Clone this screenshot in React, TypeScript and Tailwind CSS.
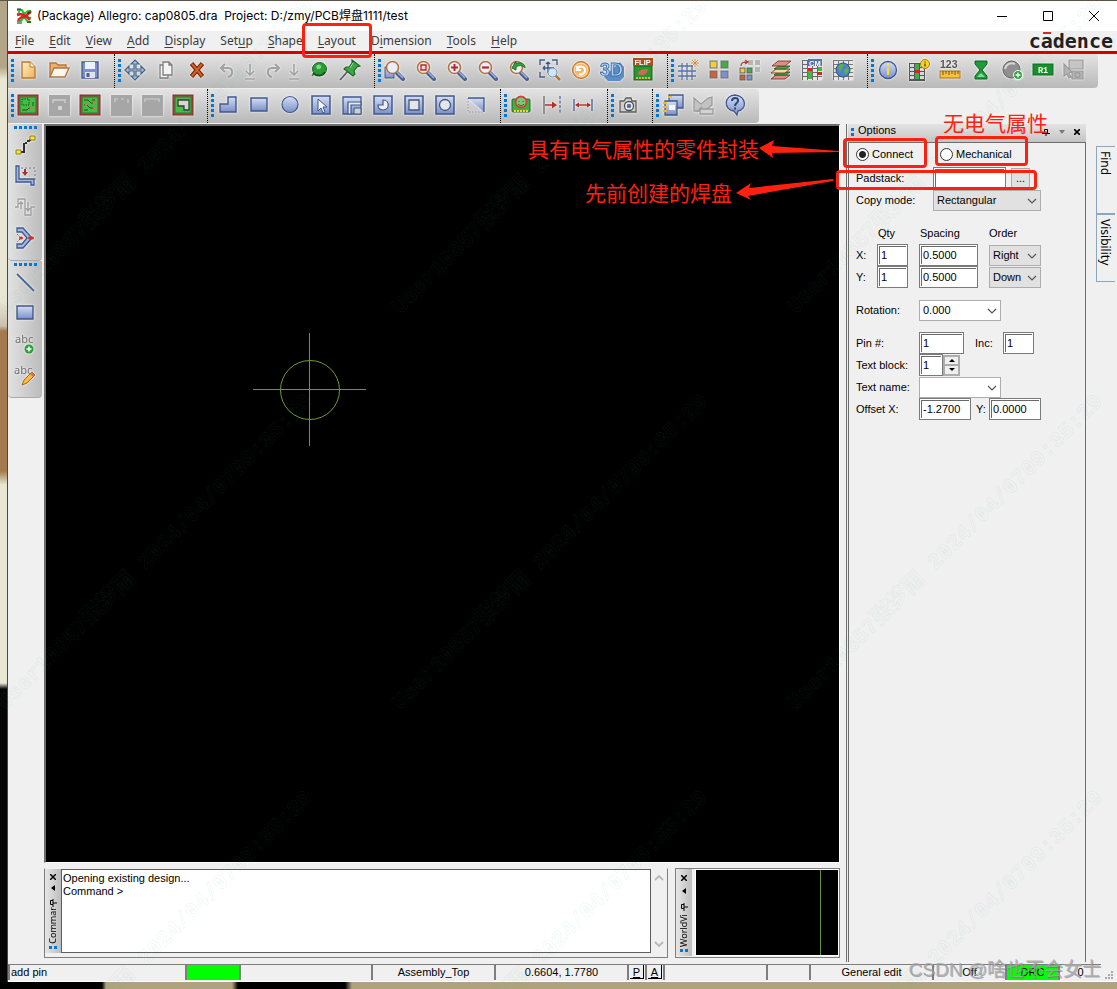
import React from "react";

type Kids = { children?: React.ReactNode };

const ink = "#3f5788";

/* ---------- icon drawings, 24 x 24 ---------- */

const Lens = ({ children }: Kids) => (
  <>
    <path d="M14 15l6 6" stroke="#4a5f94" strokeWidth="4" strokeLinecap="round" />
    <path d="M14 14l6 6" stroke="#9fb0dc" strokeWidth="1.5" />
    <circle cx="9.500" cy="9.500" r="6" fill="#e9eefb" stroke="#b07440" strokeWidth="1.600" />
    {children}
  </>
);

const Pcb = ({ children }: Kids) => (
  <>
    <rect x="2" y="2" width="20" height="20" fill="#b04a4a" stroke="#7d2525" />
    <rect x="4" y="4" width="16" height="16" fill="#43bd43" stroke="#2a7a2a" />
    {children}
  </>
);

const Dim = ({ children }: Kids) => (
  <>
    <rect x="2" y="2" width="21" height="21" fill="#a6a6a6" />
    {children}
  </>
);

const Tile = ({ children }: Kids) => (
  <>
    <rect x="3" y="3" width="18" height="18" fill="url(#blue)" stroke={ink} strokeWidth="1.500" />
    {children}
  </>
);

const Cells = ({ x, y, cols, rows, fill = "#b9bdc6" }: { x: number; y: number; cols: number; rows: number; fill?: string }) => (
  <>
    {Array.from({ length: cols * rows }, (_, i) => (
      <rect key={i} x={x + (i % cols) * 5} y={y + Math.floor(i / cols) * 4} width="4" height="3" fill={fill} />
    ))}
  </>
);

const art: Record<string, React.ReactNode> = {
  new: (
    <>
      <path d="M6 4h8l5 5v11H6z" fill="url(#sand)" stroke="#b87a35" strokeWidth="1.400" />
      <path d="M14 4v5h5" fill="#fff3d6" stroke="#b87a35" />
    </>
  ),
  open: (
    <>
      <path d="M3 19V5h6l2 2h8v3" fill="#e9b271" stroke="#b5743a" strokeWidth="1.400" />
      <path d="M3 19l4-9h15l-4 9z" fill="#fbf8f3" stroke="#b5743a" strokeWidth="1.400" />
    </>
  ),
  save: (
    <>
      <path d="M4 4h16v16H4z" fill="#7d92cb" stroke="#4b5d93" strokeWidth="1.400" />
      <path d="M7 4h10v7H7z" fill="#eef1fb" />
      <path d="M7 14h10v6H7z" fill="#dfe3ef" />
      <path d="M8.500 15h3v4h-3z" fill="#4b5d93" />
    </>
  ),
  move: (
    <path
      d="M12 2l4 4h-3v5h5V8l4 4-4 4v-3h-5v5h3l-4 4-4-4h3v-5H6v3l-4-4 4-4v3h5V6H8z"
      fill="#a9bfe0"
      stroke="#466587"
      strokeWidth="1.200"
    />
  ),
  copy: (
    <g fill="#f4f4f4" stroke="#7c7c7c" strokeWidth="1.300">
      <path d="M6 7h8v13H6z" />
      <path d="M9 4h6l3 3v10H9z" />
      <path d="M15 4v3h3" fill="none" />
    </g>
  ),
  remove: (
    <>
      <path d="M6.500 5.500l11 13M17.500 5.500l-11 13" stroke="#7a2808" strokeWidth="4.500" />
      <path d="M7 6l10 12M17 6L7 18" stroke="#d2602a" strokeWidth="2" />
    </>
  ),
  undo: <path d="M9 6l-4 4 4 4M6 10h6c6 0 5 8 0 9" fill="none" stroke="#a2a2a2" strokeWidth="2.200" />,
  redo: <path d="M15 6l4 4-4 4M18 10h-6c-6 0-5 8 0 9" fill="none" stroke="#a2a2a2" strokeWidth="2.200" />,
  down: <path d="M12 6v10M8 13l4 4 4-4M7 21h10" fill="none" stroke="#a2a2a2" strokeWidth="1.600" />,
  ball: (
    <>
      <path d="M5 18l3-4" stroke="#666" strokeWidth="1.500" />
      <ellipse cx="12.500" cy="11" rx="7" ry="6.500" fill="#2c9a35" stroke="#196322" />
      <path d="M6 15c4 4 10 3 12-1" fill="none" stroke="#155a1d" strokeWidth="2" />
      <path d="M9 8c2-2 4-2 5 0s-2 4-4 3" fill="#7fd886" />
    </>
  ),
  pin: (
    <>
      <path d="M2 22l8-9" stroke="#5c5c5c" strokeWidth="1.800" />
      <path d="M14 2l8 6-3 1-3 4 1 3-2 2-9-7 2-2h3l3-4z" fill="#3fa648" stroke="#1b6626" strokeWidth="1.200" />
      <path d="M15 5l-3 5" stroke="#98e09d" />
    </>
  ),
  zoomFit: (
    <>
      <path d="M2 9h9v11H2z" fill="url(#blue)" stroke={ink} />
      <Lens />
    </>
  ),
  zoomBox: (
    <Lens>
      <path d="M7 7h5v5H7z" fill="#f6d8d8" stroke="#b42b2b" strokeWidth="1.400" />
    </Lens>
  ),
  zoomIn: (
    <Lens>
      <path d="M9.500 6v7M6 9.500h7" stroke="#b42b2b" strokeWidth="2" />
    </Lens>
  ),
  zoomOut: (
    <Lens>
      <path d="M6 9.500h7" stroke="#b42b2b" strokeWidth="2.200" />
    </Lens>
  ),
  zoomPrev: (
    <Lens>
      <path d="M5 10l4-7v3c5-3 9 0 9 4-3-3-6-3-9-1v3z" fill="#35a33c" stroke="#1d6c25" />
    </Lens>
  ),
  zoomWorld: (
    <>
      <path d="M2 7V2h5M14 2h5v5M2 14v5h5M10 5v10M5 10h11M10 4l-2 2M10 4l2 2M5 10l2-2M5 10l2 2" fill="none" stroke={ink} strokeWidth="1.400" />
      <path d="M17 17l5 5" stroke="#b07440" strokeWidth="2.500" />
      <circle cx="14.500" cy="14.500" r="4.500" fill="#cfe7fb" stroke="#6c8fc0" />
    </>
  ),
  refresh: (
    <>
      <circle cx="12" cy="12" r="8.500" fill="#f2a04a" stroke="#b8702a" />
      <circle cx="12" cy="12" r="6.800" fill="#f6b768" stroke="#fbe3c0" />
      <path d="M8 8v4h4M8 12c1-5 8-4 8 0s-4 5-6 4" fill="none" stroke="#fff" strokeWidth="2" />
    </>
  ),
  three: (
    <>
      <path d="M4 19l4 4h12l4-4V9l-4-5z" fill="#5d8dc4" />
      <text x="0" y="18" fontFamily="Liberation Sans" fontSize="18" fontWeight="bold" fill="#b5d4f2" stroke="#376aa5" strokeWidth=".9">
        3D
      </text>
    </>
  ),
  flip: (
    <>
      <rect x="3" y="8" width="18" height="14" fill="#2d9434" stroke="#125f1a" />
      <path d="M5 20h14" stroke="#f0d23c" strokeWidth="1.500" strokeDasharray="2 1" />
      <path d="M7 16c1-5 5-5 10-5-1 5-4 7-8 6z" fill="#cc6c53" />
      <rect x="2" y="0" width="20" height="8" fill="#a8501c" />
      <text x="3.500" y="7" fontFamily="Liberation Sans" fontSize="7.500" fontWeight="bold" fill="#fff">
        FLIP
      </text>
    </>
  ),
  grid: (
    <>
      <path d="M6 5v17M11 5v17M16 7v15M2 8h15M2 13h18M2 18h18" stroke="#5872a6" strokeWidth="1.300" />
      <path d="M19 1v8M15 5h8M16 2l6 6M22 2l-6 6" stroke="#d98425" strokeWidth=".8" />
    </>
  ),
  place: (
    <g stroke="#6e6e6e">
      <rect x="3" y="3" width="7" height="7" fill="#f1cf3c" />
      <rect x="14" y="3" width="7" height="7" fill="#3fae43" />
      <rect x="3" y="13" width="7" height="7" fill="#c9623d" />
      <rect x="14" y="13" width="7" height="7" fill="#7d92cb" />
    </g>
  ),
  unplace: (
    <>
      <path d="M10 2h5v5h-5zM17 2h5v5h-5zM17 9h5v5h-5z" fill="#b5b5b5" />
      <g stroke="#5e5e5e">
        <rect x="2" y="10" width="5" height="5" fill="#f1cf3c" />
        <rect x="9" y="10" width="5" height="5" fill="#3fae43" />
        <rect x="2" y="17" width="5" height="5" fill="#c9623d" />
        <rect x="9" y="17" width="5" height="5" fill="#7d92cb" />
      </g>
      <path d="M3 8c0-4 3-4 6-4M7 2l3 2-3 2" fill="none" stroke="#b43a2e" strokeWidth="1.300" />
    </>
  ),
  layers: (
    <g strokeWidth=".9">
      <path d="M7 17h14l-5 4H2z" fill="#dd8f80" stroke="#7c2f2a" />
      <path d="M9 14h12l-4 3H5z" fill="#48a548" stroke="#1d5f22" />
      <path d="M7 11h14l-5 4H2z" fill="#f2dc9a" stroke="#7c2f2a" />
      <path d="M9 8h12l-4 3H5z" fill="#48a548" stroke="#1d5f22" />
      <path d="M9 3h13l-6 5H3z" fill="#dd8f80" stroke="#7c2f2a" />
    </g>
  ),
  cm: (
    <>
      <rect x="2" y="2" width="20" height="20" fill="#6b6b6b" />
      <Cells x={3} y={3} cols={4} rows={5} fill="#e6e6e6" />
      <path d="M8 13h4v8H8zM18 9h4v4h-4z" fill="#3fb83f" />
      <path d="M8 10h4v3H8zM17 14h5v3h-5z" fill="#dc2323" />
      <rect x="8" y="1" width="14" height="7" fill="#5473ab" />
      <text x="9" y="7.500" fontFamily="Liberation Sans" fontSize="7.500" fontWeight="bold" fill="#fff">
        CM
      </text>
    </>
  ),
  globe: (
    <>
      <rect x="2" y="2" width="20" height="20" fill="#777" />
      <Cells x={3} y={3} cols={4} rows={5} fill="#e6e6e6" />
      <circle cx="12" cy="12" r="7" fill="#4d83c4" stroke="#2c4f86" />
      <path d="M7 9c2-4 5-3 6-2l-2 3-2 4zM13 12l4-3 1 4-4 4z" fill="#58b04e" />
    </>
  ),
  info: (
    <>
      <circle cx="12" cy="12" r="8.500" fill="url(#blue)" stroke={ink} strokeWidth="1.300" />
      <path d="M11 10h2v7h-2zM11 6h2v2.500h-2z" fill="#f4e12e" />
    </>
  ),
  gridInfo: (
    <>
      <rect x="2" y="5" width="16" height="18" fill="#555" />
      <Cells x={3} y={6} cols={3} rows={4} fill="#dadada" />
      <path d="M8 6h4v15H8z" fill="#3fae43" />
      <path d="M8 12h4v3H8z" fill="#dc2323" />
      <circle cx="18" cy="6" r="4.500" fill="#fbd326" stroke="#a87d0c" />
      <path d="M18 3.500v1M18 5.500v3" stroke="#513c00" strokeWidth="1.300" />
    </>
  ),
  ruler: (
    <>
      <text x="2" y="10" fontFamily="Liberation Sans" fontSize="10.500" fontWeight="bold" fill="#555">
        123
      </text>
      <rect x="2" y="13" width="20" height="7" fill="#f5c242" stroke="#a8701b" />
      <path d="M5 13v4M8 13v3M11 13v4M14 13v3M17 13v4M20 13v3" stroke="#7d4d0c" />
    </>
  ),
  glass: (
    <>
      <path d="M6 3h12v3l-5 6 5 6v3H6v-3l5-6-5-6z" fill="#1f9a3c" stroke="#0c5f20" />
      <path d="M8 19l4-4 4 4z" fill="#7fe093" />
    </>
  ),
  disc: (
    <>
      <circle cx="11.500" cy="11.500" r="8.500" fill="#8f8f8f" stroke="#5e5e5e" />
      <path d="M5 11c1-5 6-7 10-5" fill="none" stroke="#d8d8d8" strokeWidth="2" />
      <circle cx="18" cy="17" r="4.500" fill="#2ba03a" stroke="#fff" />
      <path d="M18 14.500v5M15.500 17h5" stroke="#fff" strokeWidth="1.400" />
    </>
  ),
  r1: (
    <>
      <rect x="2" y="6" width="20" height="11" fill="#188f2c" stroke="#0f6a1e" />
      <text x="7" y="14.500" fontFamily="Liberation Mono" fontSize="8.500" fontWeight="bold" fill="#e8ffe8">
        R1
      </text>
    </>
  ),
  machine: (
    <g fill="#b4b4b4" stroke="#999" strokeWidth="1.200">
      <path d="M7 2h14v9H7z" fill="#c5c5c5" />
      <path d="M10 13h11v8H10zM2 6l8 8-3 1 2 4-2 1-2-4-3 2z" />
      <circle cx="15.500" cy="17" r="2.500" />
    </g>
  ),
  pcbA: (
    <Pcb>
      <path d="M6 6h7v6H6z" fill="none" stroke="#17551a" strokeDasharray="1.500 1" />
      <path d="M6 17h5l2-2h3M17 9v4" fill="none" stroke="#17551a" />
      <circle cx="15" cy="15" r="1.500" fill="#e06a5b" />
    </Pcb>
  ),
  dimA: (
    <Dim>
      <path d="M6 10V7h12v3" fill="none" stroke="#d0d0d0" strokeWidth="1.300" />
      <path d="M11 13h4v4h-4z" fill="#d4d4d4" />
    </Dim>
  ),
  pcbB: (
    <Pcb>
      <path d="M6 7h4l3 3h3M6 12h3l3 3h4M6 17h4M14 7h3" fill="none" stroke="#17551a" />
      <circle cx="8" cy="12" r="1.300" fill="#e06a5b" />
      <circle cx="16" cy="15" r="1.300" fill="#e06a5b" />
      <circle cx="16" cy="10" r="1.300" fill="#e06a5b" />
    </Pcb>
  ),
  dimB: (
    <Dim>
      <path d="M6 9V6h3M12 6h3M19 6v4" fill="none" stroke="#cfcfcf" strokeWidth="1.200" />
    </Dim>
  ),
  dimC: (
    <Dim>
      <path d="M5 9V6h14v3" fill="none" stroke="#cfcfcf" strokeWidth="1.200" />
    </Dim>
  ),
  pcbC: (
    <Pcb>
      <path d="M7 7h11v10h-5v-4H7z" fill="#d6d6d6" stroke="#3b3b3b" strokeWidth="1.300" />
    </Pcb>
  ),
  shape: <path d="M12 4h8v15H4v-8h8z" fill="url(#blue)" stroke={ink} strokeWidth="1.400" />,
  rect: <path d="M4 5h16v13H4z" fill="url(#blue)" stroke={ink} strokeWidth="1.400" />,
  circle: <circle cx="12" cy="11.500" r="8" fill="url(#blue)" stroke={ink} strokeWidth="1.200" />,
  pick: (
    <Tile>
      <path d="M9 6v12l3-3 2 5 2-1-2-5h4z" fill="#f5f7fc" stroke={ink} />
    </Tile>
  ),
  corner: (
    <>
      <path d="M3 4h18v17H3z" fill="url(#blue)" stroke={ink} strokeWidth="1.300" />
      <path d="M8 21V9h13v3H11v9z" fill="#e7ebf6" stroke={ink} strokeWidth="1.200" />
      <path d="M14 21v-6h7v6z" fill="#cfcfcf" stroke={ink} />
    </>
  ),
  arc: (
    <Tile>
      <path d="M7 12h5V7c7 0 7 10 0 10-3 0-5-2-5-5z" fill="#edf0f9" stroke={ink} strokeWidth="1.200" />
    </Tile>
  ),
  hole: (
    <Tile>
      <path d="M7 7h10v10H7z" fill="#e6e6e6" stroke={ink} strokeWidth="1.300" />
    </Tile>
  ),
  ring: (
    <Tile>
      <circle cx="12" cy="12" r="5.500" fill="#e6e6e6" stroke={ink} strokeWidth="1.300" />
    </Tile>
  ),
  slant: (
    <>
      <path d="M4 5h16v14z" fill="url(#blue)" />
      <path d="M4 5v14h16" fill="none" stroke="#8794b8" strokeDasharray="1.500 1.500" />
      <path d="M4 5h16v14" fill="none" stroke={ink} strokeWidth="1.300" />
    </>
  ),
  drc: (
    <>
      <rect x="3" y="6" width="18" height="13" rx="1" fill="#3fae43" stroke="#1f6923" />
      <path d="M5 18h14" stroke="#f0d23c" strokeWidth="2" strokeDasharray="2 1" />
      <circle cx="12" cy="9" r="5.500" fill="#7dc878" stroke="#c8453d" strokeWidth="1.800" />
      <path d="M10 8v1M14 8v1M9 11c2 2 4 2 6 0" stroke="#1f6923" fill="none" />
    </>
  ),
  arrowTo: (
    <>
      <path d="M4 3v18" stroke="#6e6e6e" strokeWidth="1.400" />
      <path d="M20 3v18" stroke="#50669b" strokeWidth="1.300" strokeDasharray="3 1.500" />
      <path d="M5 12h9" stroke="#b42b2b" strokeWidth="1.500" />
      <path d="M12 8.500l5 3.500-5 3.500z" fill="#b42b2b" />
    </>
  ),
  span: (
    <>
      <path d="M3 6v12M21 6v12" stroke="#50669b" strokeWidth="1.400" />
      <path d="M5 12h14" stroke="#b42b2b" strokeWidth="1.400" />
      <path d="M4 12l4-2.500v5zM20 12l-4-2.500v5z" fill="#b42b2b" />
    </>
  ),
  camera: (
    <>
      <path d="M4 8h4l2-3h5l1 3h4v11H4z" fill="#cfcfcf" stroke="#5c5c5c" strokeWidth="1.300" />
      <circle cx="13" cy="13" r="4.500" fill="#f2f2f2" stroke="#4f4f4f" strokeWidth="1.300" />
      <circle cx="13" cy="13" r="2.300" fill="#57709f" />
    </>
  ),
  books: (
    <>
      <path d="M8 2h14v13H8z" fill="url(#blue)" stroke={ink} strokeWidth="1.300" />
      <path d="M4 8h12v14H4z" fill="url(#blue)" stroke={ink} strokeWidth="1.300" />
      <path d="M8 12h6v5H8z" fill="#f4f6fb" />
      <path d="M2 10h4M2 14h4M2 18h4M7 4h4" stroke="#eebb22" strokeWidth="2" />
    </>
  ),
  mail: (
    <g fill="#c2c2c2" stroke="#9b9b9b" strokeWidth="1.300">
      <path d="M2 5l7 6 7-6 4-1v8l-7 6H2z" />
      <path d="M8 16h13v5H8z" fill="#d3d3d3" />
      <path d="M5 19l5-5" />
    </g>
  ),
  help: (
    <>
      <path d="M12 2c12 1 12 15 3 16l-1 4-3-4C0 17 1 2 12 2z" fill="url(#blue)" stroke={ink} strokeWidth="1.300" />
      <path d="M9 8c0-4 7-4 6 0 0 2-3 2-3 5" fill="none" stroke="#2f4476" strokeWidth="2" />
      <path d="M11 14.500h2v2h-2z" fill="#2f4476" />
    </>
  ),
  route: (
    <>
      <path d="M6 19h5v-9h3M14 8h2l3-3" fill="none" stroke="#2d2d2d" strokeWidth="2" strokeDasharray="14 1 4 1" />
      <path d="M3 17h5v4H3zM17 3h5v4h-5z" fill="#f4ea3c" stroke="#8c7b10" />
    </>
  ),
  slide: (
    <>
      <path d="M8 4h14v12" fill="none" stroke="#64759f" strokeDasharray="2 2" />
      <path d="M3 2h3v13h15v6h-3v-3H3z" fill="#a3b8e6" stroke={ink} strokeWidth="1.300" />
      <path d="M12 5v5" stroke="#b42b2b" strokeWidth="2" />
      <path d="M9 8h6l-3 4z" fill="#b42b2b" />
    </>
  ),
  delay: <path d="M2 12h3V4h7v16h6v-8h4M8 14V7M6 9l2-2 2 2M15 7v8M13 13l2 3 2-3" fill="none" stroke="#9c9c9c" strokeWidth="1.300" />,
  vertex: (
    <>
      <path d="M4 2h6l9 10-9 10H4v-4h5l5-6-5-6H4z" fill="#a3b8e6" stroke={ink} strokeWidth="1.300" />
      <path d="M4 8l4 4-4 4" fill="none" stroke="#4c5a80" strokeDasharray="2 1.500" />
      <ellipse cx="8" cy="12" rx="2" ry="1.500" fill="#c8352d" />
      <ellipse cx="18" cy="12" rx="3" ry="1.700" fill="#c8352d" />
    </>
  ),
  line: <path d="M4 4l17 17" stroke="#4a668f" strokeWidth="1.800" />,
  textAdd: (
    <>
      <text x="2" y="11" fontFamily="Noto Sans" fontSize="11" fill="#6d6d6d">
        abc
      </text>
      <circle cx="16" cy="17" r="4.500" fill="#2ba03a" />
      <path d="M16 14.500v5M13.500 17h5" stroke="#fff" strokeWidth="1.500" />
    </>
  ),
  textEdit: (
    <>
      <text x="1" y="11" fontFamily="Noto Sans" fontSize="11" fill="#6d6d6d">
        abc
      </text>
      <path d="M9 22l2-5 8-8 3 3-8 8z" fill="#f8bf3a" stroke="#a8601d" />
      <path d="M19 9l3 3-2 2-3-3z" fill="#da6e58" />
    </>
  ),
};

function Tool({ name, label, narrow = false }: { name: string; label: string; narrow?: boolean }) {
  return (
    <button type="button" aria-label={label} className={narrow ? "flex h-7 w-4 items-center justify-center" : "flex h-7 w-7 items-center justify-center"}>
      <svg viewBox="0 0 24 24" fill="none" className="h-6 w-6 shrink-0 drop-shadow-[0_0_1px_#ffffff]" aria-hidden="true">
        {art[name]}
      </svg>
    </button>
  );
}

function Grip({ across = false }: { across?: boolean }) {
  return (
    <span className={across ? "flex gap-0.5" : "flex flex-col gap-0.5"}>
      {[0, 1, 2, 3, 4].map((i) => (
        <span key={i} className="size-[3px] bg-[#0078d7]" />
      ))}
    </span>
  );
}

function Group({ items, last = false, children }: { items?: string[][]; last?: boolean } & Kids) {
  return (
    <div className={last ? "flex items-center pr-[10px] pb-0.5 pl-[3px]" : "flex items-center border-r border-dotted border-black pr-[10px] pb-0.5 pl-[3px]"}>
      <Grip />
      <div className="flex gap-[3px]">
        {items?.map(([n, l]) => (
          <Tool key={n} name={n} label={l} />
        ))}
        {children}
      </div>
    </div>
  );
}

const bar = "flex w-max rounded-r bg-linear-to-b from-[#e3e3e3] to-[#b9b9b9]";

function Toolbars() {
  return (
    <div>
      <div className={`${bar} h-[34px]`}>
        <Group items={[["new", "New"], ["open", "Open"], ["save", "Save"]]} />
        <Group items={[["move", "Move"], ["copy", "Copy"], ["remove", "Delete"]]}>
          <div className="flex">
            <Tool name="undo" label="Undo" />
            <Tool name="down" label="Undo list" narrow />
            <Tool name="redo" label="Redo" />
            <Tool name="down" label="Redo list" narrow />
          </div>
          <Tool name="ball" label="Fix" />
          <Tool name="pin" label="Unfix" />
        </Group>
        <Group
          items={[
            ["zoomFit", "Zoom points"], ["zoomBox", "Zoom fit"], ["zoomIn", "Zoom in"], ["zoomOut", "Zoom out"], ["zoomPrev", "Zoom previous"],
            ["zoomWorld", "Zoom world"], ["refresh", "Refresh"], ["three", "3D view"], ["flip", "Flip design"],
          ]}
        />
        <Group items={[["grid", "Grid"], ["place", "Color"], ["unplace", "Shadow"], ["layers", "Cross section"], ["cm", "Constraint manager"], ["globe", "Database check"]]} />
        <Group
          last
          items={[
            ["info", "Show element"], ["gridInfo", "Properties"], ["ruler", "Measure"], ["glass", "Waive"], ["disc", "Add pin"],
            ["r1", "Assign refdes"], ["machine", "Export"],
          ]}
        />
      </div>
      <div className={`${bar} h-[35px] border-t border-[#eeeeee]`}>
        <Group items={[["pcbA", "General edit"], ["dimA", "Placement edit"], ["pcbB", "Etch edit"], ["dimB", "Signal integrity"], ["dimC", "RF edit"], ["pcbC", "Shape edit"]]} />
        <Group
          items={[
            ["shape", "Add shape"], ["rect", "Add rectangle"], ["circle", "Add circle"], ["pick", "Select shape"], ["corner", "Edit boundary"],
            ["arc", "Void polygon"], ["hole", "Void rectangle"], ["ring", "Void circle"], ["slant", "Delete islands"],
          ]}
        />
        <Group items={[["drc", "DRC update"], ["arrowTo", "Align"], ["span", "Dimension"]]} />
        <Group items={[["camera", "Snapshot"]]} />
        <Group last items={[["books", "Reports"], ["mail", "Send"], ["help", "Help topics"]]} />
      </div>
    </div>
  );
}

const menus = [
  ["", "F", "ile"], ["", "E", "dit"], ["", "V", "iew"], ["", "A", "dd"], ["", "D", "isplay"], ["Set", "u", "p"],
  ["", "S", "hape"], ["", "L", "ayout"], ["D", "i", "mension"], ["", "T", "ools"], ["", "H", "elp"],
];

function Header() {
  return (
    <header className="bg-[#f0f0f0] font-['Noto_Sans','Noto_Sans_CJK_SC',sans-serif] text-xs">
      <div className="flex h-[30px] items-center bg-white pl-2">
        <svg viewBox="0 0 16 16" className="mr-[5px] size-4" fill="none" aria-hidden="true">
          <path d="M1 2h5l2 4 4-3h3M1 13h4l3-4 4 5h3M1 6h4M11 9l4 1" stroke="#21c821" strokeWidth="2" />
          <path d="M1 7l4-1 5 2 5-5M2 12l5-4 4 1 3 3M5 9h5" stroke="#e0202a" strokeWidth="2.500" />
          <path d="M1 1h4M2 4h2M1 15h5M11 5h4M11 14h4" stroke="#222" />
        </svg>
        <h1 className="flex-1 font-['Inter','Noto_Sans_CJK_SC',sans-serif] whitespace-pre text-black">(Package) Allegro: cap0805.dra{"  "}Project: D:/zmy/PCB焊盘1111/test</h1>
        <div className="flex">
          <button type="button" aria-label="Minimize" className="flex h-[30px] w-[46px] items-center justify-center">
            <svg viewBox="0 0 10 10" className="size-[10px]" stroke="#000"><path d="M0 5.500h10" /></svg>
          </button>
          <button type="button" aria-label="Maximize" className="flex h-[30px] w-[46px] items-center justify-center">
            <svg viewBox="0 0 10 10" className="size-[10px]" stroke="#000" fill="none"><path d="M.5.500h9v9h-9z" /></svg>
          </button>
          <button type="button" aria-label="Close" className="flex h-[30px] w-[46px] items-center justify-center">
            <svg viewBox="0 0 10 10" className="size-[10px]" stroke="#000"><path d="M0 0l10 10M10 0L0 10" /></svg>
          </button>
        </div>
      </div>
      <div className="flex h-5 items-center justify-between pr-1">
        <nav className="flex gap-px text-[#3c3c3c]">
          {menus.map(([a, k, b]) => (
            <button key={a + k + b} type="button" className="relative px-[7px] leading-5">
              {a}
              <span className="underline underline-offset-2">{k}</span>
              {b}
              {b === "ayout" && <span className="absolute -top-2 -right-[9px] -left-[9px] z-20 h-[35px] rounded border-3 border-[#ff2010]" />}
            </button>
          ))}
        </nav>
        <div className="relative font-['DejaVu_Sans_Mono',monospace] text-[20px] leading-5 font-bold text-[#231f20]">
          cadence
          <span className="absolute top-px left-[14px] h-[2px] w-2 bg-[#d8232a]" />
        </div>
      </div>
      <div className="h-[3px] bg-[#d20000]" />
    </header>
  );
}

function SideGroup({ items }: { items: string[][] }) {
  return (
    <div className="flex h-[137px] flex-col items-center rounded-b border-b border-[#aaaaaa] bg-linear-to-r from-[#e2e2e2] to-[#bcbcbc] pt-0.5">
      <Grip across />
      <div className="flex flex-col gap-[3px] pt-0.5">
        {items.map(([n, l]) => (
          <Tool key={n} name={n} label={l} />
        ))}
      </div>
    </div>
  );
}

const note = "absolute whitespace-nowrap font-['Noto_Sans_CJK_SC',sans-serif] text-[21px] leading-6 text-[#ff2010]";

function Canvas() {
  return (
    <main className="relative min-h-[400px] flex-1 border-t-2 border-l-2 border-r border-b border-t-[#6d6d6d] border-r-white border-b-white border-l-[#6d6d6d] bg-black">
      <svg viewBox="0 0 114 114" className="absolute top-[207px] left-[207px] size-[114px]" fill="none" aria-hidden="true">
        <path d="M0 56.500h113M56.500 0v113" stroke="#7d8468" />
        <circle cx="57" cy="57" r="29.500" stroke="#6f9a3a" />
      </svg>
      <p className={`${note} top-[10px] right-20`}>具有电气属性的零件封装</p>
      <p className={`${note} top-[54px] right-[107px]`}>先前创建的焊盘</p>
      <svg viewBox="0 0 108 70" className="absolute top-[11px] -right-px h-[70px] w-[108px]" fill="#ff2010" aria-hidden="true">
        <path d="M27 11l15-8-2 6 67 5v1l-67 1 1 5zM4 56l15-10-2 5 84-9v2L16 59l3 4z" />
      </svg>
    </main>
  );
}

/* ---------- docked panels ---------- */

function DockStrip({ title }: { title: string }) {
  return (
    <div className="flex w-4 flex-col items-center bg-linear-to-r from-[#e6e6e6] to-[#bdbdbd] pt-[5px] pb-1">
      <button type="button" aria-label="Close panel" className="flex h-2 items-center">
        <svg viewBox="0 0 6 6" className="size-[6px]" stroke="#000" strokeWidth="1.500"><path d="M0 0l6 6M6 0L0 6" /></svg>
      </button>
      <button type="button" aria-label="Panel menu" className="mt-[5px] flex h-2 items-center">
        <svg viewBox="0 0 4 6" className="h-[6px] w-1"><path d="M4 0v6L0 3z" /></svg>
      </button>
      <button type="button" aria-label="Pin panel" className="mt-2 flex h-2 items-center">
        <svg viewBox="0 0 8 8" className="size-2" stroke="#000" fill="none"><path d="M4 0v8M4 4h4M4 1.500H1.500v4H4" /></svg>
      </button>
      <span className="flex-1 rotate-180 font-['Noto_Sans',sans-serif] text-[9px] leading-3 text-black [writing-mode:vertical-rl]">{title}</span>
      <span className="mt-0.5 flex gap-0.5">
        <span className="size-[3px] bg-[#0078d7]" />
        <span className="size-[3px] bg-[#0078d7]" />
      </span>
    </div>
  );
}

function Chevron({ up = false, pale = false }: { up?: boolean; pale?: boolean }) {
  return (
    <svg viewBox="0 0 10 6" className="h-[6px] w-[10px]" fill="none" stroke={pale ? "#b8b8b8" : "#555"} strokeWidth={pale ? 1.8 : 1.2} aria-hidden="true">
      <path d={up ? "M1 5l4-4 4 4" : "M1 1l4 4 4-4"} />
    </svg>
  );
}

function BottomPanels() {
  return (
    <div className="mt-[5px] flex h-[90px] gap-[7px]">
      <section aria-label="Command" className="flex flex-1 border-t border-r border-b border-l border-[#7e7e7e] border-t-transparent pb-1">
        <DockStrip title="Commar" />
        <div className="flex-1 border border-[#5e5e5e] bg-white px-px pt-0.5 text-[11px] leading-[13px] text-black">
          <p>Opening existing design...</p>
          <p>Command &gt;</p>
        </div>
        <div className="flex w-4 flex-col items-center justify-between py-[6px]">
          <Chevron up pale />
          <Chevron pale />
        </div>
      </section>
      <section aria-label="WorldView" className="flex w-[165px] border border-[#7e7e7e] pb-px">
        <DockStrip title="WorldVi" />
        <div className="ml-[3px] flex flex-1 justify-end border border-white bg-black pr-[17px]">
          <span className="w-px bg-[#628f30]" />
        </div>
      </section>
    </div>
  );
}

function Field({ id, label, value, className }: { id: string; label: string; value: string; className: string }) {
  return (
    <span className={`${className} h-[22px] shrink-0 border border-[#7a7a7a] bg-white p-px`}>
      <input id={id} aria-label={label} defaultValue={value} className="block h-full w-full border-t border-l border-[#696969] bg-white pb-0.5 pl-px text-[11px] text-black outline-none" />
    </span>
  );
}

function Choice({ id, label, options, className }: { id: string; label: string; options: string[]; className: string }) {
  return (
    <span className={`${className} relative h-[21px] shrink-0`}>
      <select id={id} aria-label={label} className="block h-full w-full appearance-none border border-[#adadad] bg-inherit pl-[3px] text-[11px] text-black outline-none">
        {options.map((o) => (
          <option key={o}>{o}</option>
        ))}
      </select>
      <span className="pointer-events-none absolute top-2 right-1">
        <Chevron />
      </span>
    </span>
  );
}

const row = "flex h-[22px] items-center";
const box = "pointer-events-none absolute z-20 rounded border-3 border-[#ff2010]";

function Options() {
  return (
    <aside className="relative flex w-[240px] flex-col border-l border-[#6d6d6d] bg-[#f0f0f0] pl-px text-[11px] text-black">
      <div className="flex h-[18px] items-center bg-linear-to-b from-[#e4e4e4] to-[#c4c4c4] pr-[6px] pl-[3px] pb-[6px]">
        <span className="mt-1 flex flex-col gap-0.5">
          <span className="size-[3px] bg-[#0078d7]" />
          <span className="size-[3px] bg-[#0078d7]" />
        </span>
        <h2 className="ml-1 flex-1 leading-3">Options</h2>
        <span className="mt-1 flex items-center gap-[9px]">
          <button type="button" aria-label="Pin panel">
            <svg viewBox="0 0 8 8" className="size-2" stroke="#000" fill="none"><path d="M0 5.500h8M4 5v3M2.500 5V1.500h3V5" /></svg>
          </button>
          <button type="button" aria-label="Panel menu">
            <svg viewBox="0 0 6 4" className="h-1 w-[6px]"><path d="M0 0h6L3 4z" fill="#777" /></svg>
          </button>
          <button type="button" aria-label="Close panel">
            <svg viewBox="0 0 6 6" className="size-[6px]" stroke="#000" strokeWidth="1.600"><path d="M0 0l6 6M6 0L0 6" /></svg>
          </button>
        </span>
      </div>
      <form className="flex-1 border-t border-r border-l border-[#6d6d6d] pl-[7px]">
        <div className="flex h-6 items-center pb-px">
          {["Connect", "Mechanical"].map((t, i) => (
            <label key={t} className={i === 0 ? "flex w-[84px] items-center gap-[3px]" : "flex items-center gap-[3px]"}>
              <input type="radio" name="kind" defaultChecked={i === 0} className="peer size-[13px] appearance-none rounded-full border border-[#333] bg-white checked:bg-[radial-gradient(#222_0_3px,#fff_4px)]" />
              {t}
            </label>
          ))}
        </div>
        <div className={row}>
          <label htmlFor="padstack" className="w-[77px]">Padstack:</label>
          <Field id="padstack" label="Padstack" value="" className="w-[73px]" />
          <button type="button" className="ml-[5px] h-[21px] w-[19px] border border-[#adadad] bg-[#e1e1e1] leading-4">...</button>
        </div>
        <div className={row}>
          <label htmlFor="mode" className="w-[77px]">Copy mode:</label>
          <Choice id="mode" label="Copy mode" options={["Rectangular", "Polar"]} className="w-[108px] bg-[#e1e1e1]" />
        </div>
        <div className={`${row} mt-[11px] pl-[22px]`}>
          <span className="w-[42px]">Qty</span>
          <span className="w-[69px]">Spacing</span>
          <span>Order</span>
        </div>
        {[["X", "Right", "Left"], ["Y", "Down", "Up"]].map(([axis, a, b]) => (
          <div key={axis} className={row}>
            <label htmlFor={`qty${axis}`} className="w-[21px]">{axis}:</label>
            <Field id={`qty${axis}`} label={`${axis} quantity`} value="1" className="w-[31px]" />
            <Field id={`gap${axis}`} label={`${axis} spacing`} value="0.5000" className="mx-[11px] w-[59px]" />
            <Choice id={`order${axis}`} label={`${axis} order`} options={[a, b]} className="w-[52px] bg-[#e1e1e1]" />
          </div>
        ))}
        <div className={`${row} mt-[11px]`}>
          <label htmlFor="rotation" className="w-[63px]">Rotation:</label>
          <Choice id="rotation" label="Rotation" options={["0.000", "90.000"]} className="w-[82px] bg-white" />
        </div>
        <div className={`${row} mt-[11px]`}>
          <label htmlFor="pin" className="w-[63px]">Pin #:</label>
          <Field id="pin" label="Pin number" value="1" className="w-[45px]" />
          <label htmlFor="inc" className="ml-[11px] w-[28px]">Inc:</label>
          <Field id="inc" label="Increment" value="1" className="w-[31px]" />
        </div>
        <div className={row}>
          <label htmlFor="block" className="w-[63px]">Text block:</label>
          <Field id="block" label="Text block" value="1" className="w-6" />
          <span className="flex h-[21px] w-[17px] flex-col border border-[#adadad] bg-[#f0f0f0]">
            {["Increase", "Decrease"].map((t, i) => (
              <button key={t} type="button" aria-label={t} className="flex flex-1 items-center justify-center border border-[#adadad]">
                <svg viewBox="0 0 6 3" className="h-[3px] w-[6px]"><path d={i ? "M0 0h6L3 3z" : "M0 3h6L3 0z"} /></svg>
              </button>
            ))}
          </span>
        </div>
        <div className={row}>
          <label htmlFor="textname" className="w-[63px]">Text name:</label>
          <Choice id="textname" label="Text name" options={[""]} className="w-[82px] bg-white" />
        </div>
        <div className={row}>
          <label htmlFor="offx" className="w-[63px]">Offset X:</label>
          <Field id="offx" label="Offset X" value="-1.2700" className="w-[52px]" />
          <label htmlFor="offy" className="ml-[5px] w-[13px]">Y:</label>
          <Field id="offy" label="Offset Y" value="0.0000" className="w-[52px]" />
        </div>
      </form>
      <span className={`${box} top-[14px] left-[-4px] h-[30px] w-[84px]`} />
      <span className={`${box} top-3 left-[88px] h-[30px] w-[93px]`} />
      <span className={`${box} top-[46px] left-[-11px] h-5 w-[201px]`} />
      <p className={`${note} -top-[14px] left-[96px] z-20`}>无电气属性</p>
    </aside>
  );
}

function SideTabs() {
  return (
    <div className="flex w-[31px] flex-col items-end pt-[22px] pr-0.5 font-['Noto_Sans',sans-serif] text-xs text-black">
      {["Find", "Visibility"].map((t) => (
        <button key={t} type="button" className="flex h-[68px] w-[19px] items-center border-b border-l border-t border-[#8ba6bd] pt-1 pr-0.5 leading-4 [writing-mode:vertical-rl]">
          <span className="h-full text-left">{t}</span>
        </button>
      ))}
    </div>
  );
}

const cell = "flex h-4 items-center justify-center border-t border-l-2 border-[#7e7e7e] pb-px";

function StatusBar() {
  return (
    <footer className="flex h-5 items-center border-b border-white pt-px text-[11px] leading-4 text-black">
      <span className={`${cell} w-[177px] justify-start! pl-px`}>add pin</span>
      <span className={`${cell} w-[54px] bg-[#00ff00]`} />
      <span className={`${cell} w-[132px]`} />
      <span className={`${cell} w-[123px]`}>Assembly_Top</span>
      <span className={`${cell} w-[133px]`}>0.6604, 1.7780</span>
      {["P", "A"].map((t) => (
        <span key={t} className={`${cell} w-[18px]`}>
          <button type="button" className="h-[14px] w-[14px] border-r border-b border-black leading-3 underline">{t}</button>
        </span>
      ))}
      <span className={`${cell} flex-1`} />
      <span className={`${cell} w-[43px]`} />
      <span className={`${cell} w-[123px]`}>General edit</span>
      <span className={`${cell} w-[73px]`}>Off</span>
      <span className={`${cell} w-[53px] bg-[#00ff00]`}>DRC</span>
      <span className={`${cell} w-[43px]`}>0</span>
      <span className="flex h-full w-4 items-end justify-center pb-px">
        <svg viewBox="0 0 9 9" className="size-[9px]" fill="#a9a9a9"><path d="M6 0h2v2H6zM3 3h2v2H3zM6 3h2v2H6zM0 6h2v2H0zM3 6h2v2H3zM6 6h2v2H6z" /></svg>
      </span>
    </footer>
  );
}

const stamps = [2, 397, 792].flatMap((x) => [310, 706, 1102].map((y) => ({ x, y })));

function Stamps() {
  return (
    <div className="pointer-events-none absolute inset-0 z-30 overflow-hidden" aria-hidden="true">
      {stamps.map(({ x, y }) => (
        <span
          key={`${x}-${y}`}
          style={{ left: x, top: y - 14 }}
          className="absolute origin-left -rotate-45 font-['Liberation_Mono','Noto_Sans_CJK_SC',monospace] text-[22px] leading-7 font-bold whitespace-nowrap text-transparent [-webkit-text-stroke:1px_rgba(50,170,140,0.08)]"
        >
          User10857张梦雨 2024/04/0709:35:29
        </span>
      ))}
    </div>
  );
}

export default function App() {
  return (
    <div className="relative flex min-h-screen flex-col overflow-hidden border-t border-[#5d5248] bg-[linear-gradient(90deg,#000_102px,#b0a27e_106px_232px,#000_238px_345px,#b0a27e_352px)] font-['Liberation_Sans','Noto_Sans_CJK_SC',sans-serif]">
      <svg className="absolute size-0" aria-hidden="true">
        <defs>
          <linearGradient id="blue" x1="0" y1="0" x2="0" y2="1">
            <stop offset="0" stopColor="#d5def5" />
            <stop offset="1" stopColor="#7b90c8" />
          </linearGradient>
          <linearGradient id="sand" x1="0" y1="0" x2="1" y2="1">
            <stop offset="0" stopColor="#fff0c4" />
            <stop offset="1" stopColor="#edb356" />
          </linearGradient>
        </defs>
      </svg>
      <div className="flex flex-1">
        <div className="w-2 border-r border-[#4c463f] bg-[linear-gradient(180deg,#b3a587_0_66px,#e9e7d4_78px_300px,#c9bfae_325px,#a37a4d_330px_470px,#e9e7d4_484px_682px,#050505_688px)]" />
        <div className="flex min-w-0 flex-1 flex-col bg-[#f0f0f0]">
          <Header />
          <Toolbars />
          <div className="flex flex-1 pt-px">
            <div className="w-[34px]">
              <SideGroup items={[["route", "Add connect"], ["slide", "Slide"], ["delay", "Delay tune"], ["vertex", "Vertex"]]} />
              <SideGroup items={[["line", "Add line"], ["rect", "Add filled rectangle"], ["textAdd", "Add text"], ["textEdit", "Edit text"]]} />
            </div>
            <div className="mr-[6px] ml-0.5 flex min-w-0 flex-1 flex-col pb-1">
              <Canvas />
              <BottomPanels />
            </div>
            <Options />
            <SideTabs />
          </div>
          <StatusBar />
        </div>
      </div>
      <div className="h-[7px]" />
      <Stamps />
      <p className="pointer-events-none absolute right-4 bottom-[7px] z-30 font-['Liberation_Sans','Noto_Sans_CJK_SC',sans-serif] text-[19px] leading-6 whitespace-nowrap text-[#a8a8a8]/80 [text-shadow:1px_1px_0_#66666680]">
        CSDN @啥也不会女士
      </p>
    </div>
  );
}
